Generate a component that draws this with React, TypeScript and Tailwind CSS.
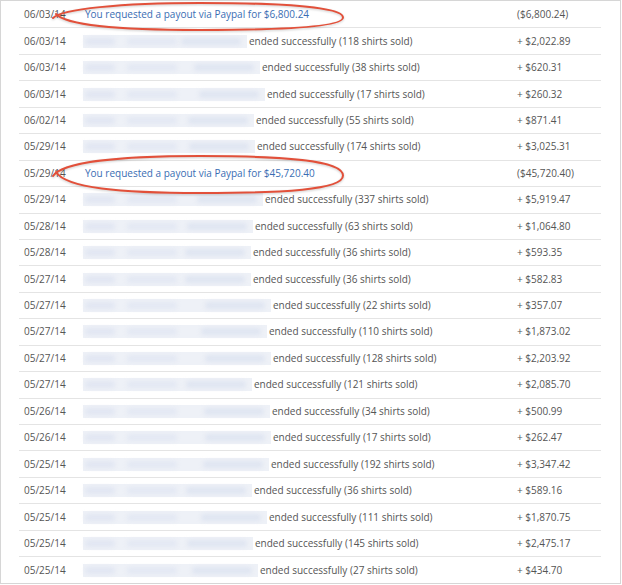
import React from 'react';

type Row = {
  date: string;
  payout?: string;
  blur?: number;
  sold?: number;
  amount: string;
};

const rows: Row[] = [
  { date: '06/03/14', payout: '$6,800.24', amount: '($6,800.24)' },
  { date: '06/03/14', blur: 164, sold: 118, amount: '+ $2,022.89' },
  { date: '06/03/14', blur: 177, sold: 38, amount: '+ $620.31' },
  { date: '06/03/14', blur: 182, sold: 17, amount: '+ $260.32' },
  { date: '06/02/14', blur: 171, sold: 55, amount: '+ $871.41' },
  { date: '05/29/14', blur: 172, sold: 174, amount: '+ $3,025.31' },
  { date: '05/29/14', payout: '$45,720.40', amount: '($45,720.40)' },
  { date: '05/29/14', blur: 180, sold: 337, amount: '+ $5,919.47' },
  { date: '05/28/14', blur: 170, sold: 63, amount: '+ $1,064.80' },
  { date: '05/28/14', blur: 168, sold: 36, amount: '+ $593.35' },
  { date: '05/27/14', blur: 168, sold: 36, amount: '+ $582.83' },
  { date: '05/27/14', blur: 188, sold: 22, amount: '+ $357.07' },
  { date: '05/27/14', blur: 184, sold: 110, amount: '+ $1,873.02' },
  { date: '05/27/14', blur: 188, sold: 128, amount: '+ $2,203.92' },
  { date: '05/27/14', blur: 169, sold: 121, amount: '+ $2,085.70' },
  { date: '05/26/14', blur: 187, sold: 34, amount: '+ $500.99' },
  { date: '05/26/14', blur: 188, sold: 17, amount: '+ $262.47' },
  { date: '05/25/14', blur: 186, sold: 192, amount: '+ $3,347.42' },
  { date: '05/25/14', blur: 169, sold: 36, amount: '+ $589.16' },
  { date: '05/25/14', blur: 184, sold: 111, amount: '+ $1,870.75' },
  { date: '05/25/14', blur: 170, sold: 145, amount: '+ $2,475.17' },
  { date: '05/25/14', blur: 175, sold: 27, amount: '+ $434.70' },
];

function Blurred({ width }: { width: number }) {
  return (
    <span className="relative inline-block h-[13px] mr-[2px] shrink-0" style={{ width }}>
      <span className="absolute inset-0 bg-[#eef1f7] blur-[0.5px]" />
      <span className="absolute left-[2px] top-[3px] h-[7px] w-[30px] rounded-sm bg-[#e1e6f2] blur-[2px]" />
      <span className="absolute left-[44px] top-[3px] h-[7px] w-[50px] rounded-sm bg-[#e3e8f3] blur-[2px]" />
      <span className="absolute right-[6px] top-[3px] h-[7px] w-[60px] rounded-sm bg-[#dfe5f1] blur-[2px]" />
    </span>
  );
}

// hand-drawn oval with a pointed left end where the stroke starts and finishes
function Ring({ className, top, bottom, tip }: { className: string; top: number; bottom: number; tip: number }) {
  const mid = (top + bottom) / 2 + 1;
  const d = [
    `M 3 ${tip + 4}`,
    `C 12 ${top + 6} 70 ${top} 150 ${top}`,
    `C 232 ${top} 293 ${top + 4} 293 ${mid}`,
    `C 293 ${bottom - 3} 232 ${bottom} 150 ${bottom}`,
    `C 70 ${bottom} 16 ${bottom - 5} 6 ${tip}`,
  ].join(' ');
  return (
    <svg
      className={`absolute pointer-events-none drop-shadow-[0_1px_1px_rgba(0,0,0,0.2)] w-[300px] ${className}`}
      viewBox={`0 0 300 ${bottom + 4}`}
    >
      <path d={d} fill="none" stroke="#e2503a" strokeWidth="2" strokeLinecap="round" />
    </svg>
  );
}

export default function App() {
  return (
    <div className="relative w-[621px] h-[584px] bg-white border border-[#d6d6d6] overflow-hidden font-['Open_Sans',sans-serif] text-[10px] text-[#555]">
      <div className="ml-[18px] mt-[1px] w-[582px]">
        {rows.map((r, i) => (
          <div
            key={i}
            className={`flex items-center h-[26.45px] ${i < rows.length - 1 ? 'border-b border-[#e4e4e4]' : ''}`}
          >
            <div className="w-[64px] pl-[5px] shrink-0">{r.date}</div>
            <div className="w-[434px] shrink-0 flex items-center whitespace-nowrap">
              {r.payout ? (
                <span className="pl-[2px] text-[#3a6db3]">
                  You requested a payout via Paypal for {r.payout}
                </span>
              ) : (
                <>
                  <Blurred width={r.blur ?? 170} />
                  <span>ended successfully ({r.sold} shirts sold)</span>
                </>
              )}
            </div>
            <div className="flex-1">{r.amount}</div>
          </div>
        ))}
      </div>
      <Ring className="left-[49px] top-[-1px] h-[34px]" top={3} bottom={30} tip={14} />
      <Ring className="left-[49px] top-[150px] h-[46px]" top={5} bottom={42} tip={21} />
    </div>
  );
}
